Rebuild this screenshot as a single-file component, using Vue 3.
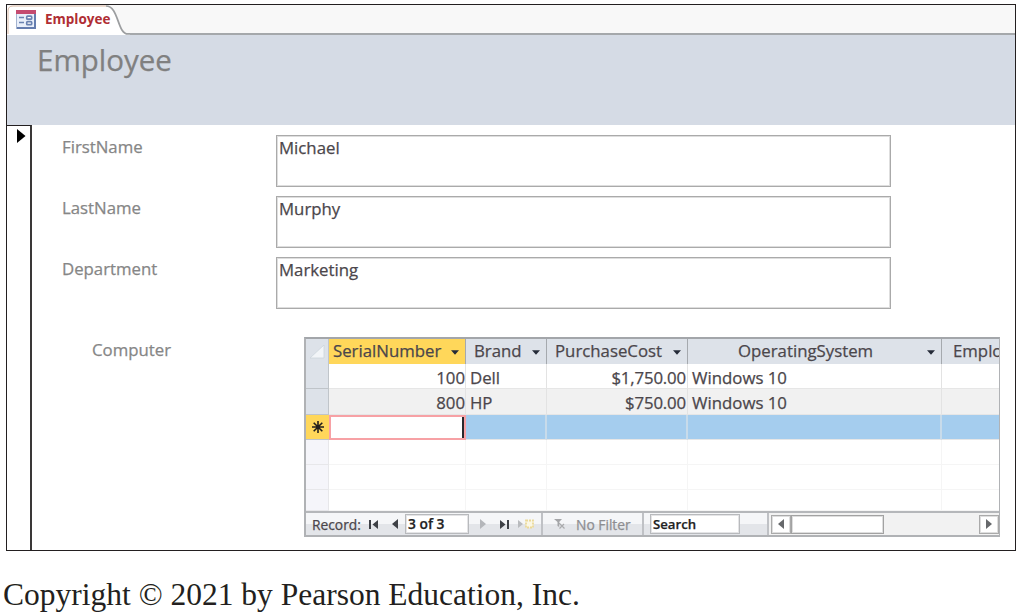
<script setup>
const fields = [
  { label: 'FirstName', value: 'Michael' },
  { label: 'LastName', value: 'Murphy' },
  { label: 'Department', value: 'Marketing' },
]
const columns = [
  { name: 'SerialNumber', cls: 'serial', menu: true },
  { name: 'Brand', cls: 'brand', menu: true },
  { name: 'PurchaseCost', cls: 'cost', menu: true },
  { name: 'OperatingSystem', cls: 'os', menu: true },
  { name: 'Emplo', cls: 'emp', menu: false },
]
const rows = [
  ['100', 'Dell', '$1,750.00', 'Windows 10', ''],
  ['800', 'HP', '$750.00', 'Windows 10', ''],
]
</script>

<template>
  <div class="page">
    <div class="window">
      <div class="tabstrip">
        <svg class="tabshape" width="123" height="30" viewBox="0 0 123 30">
          <path d="M0 30V4Q0 1 4 1H99C112 1 110 29 121 29H123V30Z" fill="#fff" />
          <path d="M1 29V6Q1 1 6 1H99" fill="none" stroke="#d9b9a4" />
          <path d="M99 1C112 1 110 29 121 29H123" fill="none" stroke="#9c9ea0" stroke-width="1.700" />
        </svg>
        <div class="tab">
          <svg width="20" height="19" viewBox="0 0 20 19">
            <rect x=".5" y=".5" width="19" height="18" fill="#e9effa" stroke="#a3b3d0" />
            <path d="M0 0H20V4H0Z" fill="#c44b70" />
            <path d="M19 4V18H1" fill="none" stroke="#657daf" stroke-width="2" />
            <path d="M3 7.500H8M3 12.500H8" stroke="#6a82b1" stroke-width="1.500" />
            <rect x="10.700" y="6.200" width="5" height="3" rx="1" fill="#fff" stroke="#6a82b1" stroke-width="1.700" />
            <rect x="10.700" y="11.700" width="5" height="3" rx="1" fill="#fff" stroke="#6a82b1" stroke-width="1.700" />
          </svg>
          <span>Employee</span>
        </div>
      </div>
      <header class="title">Employee</header>
      <div class="body">
        <div class="selector">
          <svg width="9" height="14" viewBox="0 0 9 14"><path d="M0 0L8.500 7L0 14Z" fill="#000" /></svg>
        </div>
        <main class="form">
          <div v-for="f in fields" :key="f.label" class="field">
            <label>{{ f.label }}</label>
            <div class="box">{{ f.value }}</div>
          </div>
          <div class="subrow">
            <label>Computer</label>
            <div class="subform">
              <div class="row head">
                <div class="sel">
                  <svg width="15" height="14" viewBox="0 0 15 14"><path d="M14 0V13H0Z" fill="#f2f5f8" stroke="#c9d2da" stroke-width=".7" /></svg>
                </div>
                <div v-for="c in columns" :key="c.name" class="cell" :class="c.cls">
                  <span>{{ c.name }}</span>
                  <svg v-if="c.menu" class="arrow" width="8" height="5" viewBox="0 0 8 5"><path d="M0 .3H8L4 4.800Z" fill="#252b38" /></svg>
                </div>
              </div>
              <div v-for="(r, i) in rows" :key="i" class="row data" :class="{ alt: i === 1 }">
                <div class="sel"></div>
                <div v-for="(v, j) in r" :key="j" class="cell" :class="columns[j].cls">{{ v }}</div>
              </div>
              <div class="row new">
                <div class="sel">
                  <svg width="12" height="12" viewBox="0 0 12 12"><path d="M6 0V12M0 6H12M1.700 1.700L10.300 10.300M10.300 1.700L1.700 10.300" stroke="#221f1c" stroke-width="1.600" /></svg>
                </div>
                <div v-for="c in columns" :key="c.name" class="cell" :class="c.cls"></div>
              </div>
              <div v-for="n in 3" :key="n" class="row blank">
                <div class="sel"></div>
                <div v-for="c in columns" :key="c.name" class="cell" :class="c.cls"></div>
              </div>
              <div class="nav">
                <div class="record">
                  <span class="rec">Record:</span>
                  <svg class="first" width="9" height="9" viewBox="0 0 9 9"><path d="M1 0V9" stroke="#3e4146" stroke-width="2" /><path d="M9 0V9L3.500 4.500Z" fill="#3e4146" /></svg>
                  <svg class="prev" width="6" height="10" viewBox="0 0 6 10"><path d="M6 0V10L0 5Z" fill="#3e4146" /></svg>
                  <div class="input count">3 of 3</div>
                  <svg class="next" width="6" height="10" viewBox="0 0 6 10"><path d="M0 0V10L6 5Z" fill="#b4b6ba" /></svg>
                  <svg class="last" width="9" height="9" viewBox="0 0 9 9"><path d="M8 0V9" stroke="#3e4146" stroke-width="2" /><path d="M0 0V9L5.500 4.500Z" fill="#3e4146" /></svg>
                  <svg class="add" width="16" height="10" viewBox="0 0 16 10"><path d="M0 1V9L5 5Z" fill="#b9bbbe" /><rect x="8" y="1.500" width="7" height="7" fill="#fbf7e4" stroke="#ecd998" stroke-width="1.800" stroke-dasharray="2 1" /></svg>
                </div>
                <div class="filter">
                  <svg width="12" height="12" viewBox="0 0 12 12"><path d="M0 1H8L5.200 4V9L3.500 8V4Z" fill="#a4a5a8" /><path d="M5 5L10.500 10.500M10 6L5.500 10.500" stroke="#aaabad" stroke-width="1.200" /></svg>
                  <span>No Filter</span>
                </div>
                <div class="find"><div class="input search">Search</div></div>
                <div class="scroll">
                  <div class="btn left"><svg width="6" height="10" viewBox="0 0 6 10"><path d="M6 0V10L0 5Z" fill="#66686b" /></svg></div>
                  <div class="thumb"></div>
                  <div class="btn right"><svg width="6" height="10" viewBox="0 0 6 10"><path d="M0 0V10L6 5Z" fill="#66686b" /></svg></div>
                </div>
              </div>
            </div>
          </div>
        </main>
      </div>
    </div>
    <footer>Copyright © 2021 by Pearson Education, Inc.</footer>
  </div>
</template>

<style>
body { background: #fff; }
</style>
<style scoped>
.page, .page * { box-sizing: border-box; }
.page { width: 1020px; height: 616px; padding: 4px 0 0 6px; overflow: hidden; font-family: "Open Sans", sans-serif; font-size: 16.800px; color: #4b464b; white-space: nowrap; }
svg { display: block; flex: none; }
.window { width: 1010px; height: 547px; border: 1px solid #231f20; background: #fff; display: flex; flex-direction: column; -webkit-text-stroke: .25px; }
.tabstrip { height: 30px; flex: none; position: relative; background: #f8f8f8; border-bottom: 2px solid #a5a8ab; }
.tabshape { position: absolute; left: 0; top: 0; }
.tab { position: relative; display: flex; align-items: center; height: 28px; padding-left: 9px; gap: 9px; font-weight: 700; font-size: 13.500px; color: #b02e34; -webkit-text-stroke: 0; }
.title { height: 90px; flex: none; background: #d5dbe5; padding: 5px 0 0 30px; font-size: 29.500px; line-height: 40px; color: #808080; }
.body { flex: 1; display: flex; min-height: 0; }
.selector { width: 25px; border-top: 1px solid #231f20; border-right: 2px solid #3a3838; padding: 3px 0 0 10px; }
.form { flex: 1; padding: 10px 0 0 30px; min-width: 0; }
.field { display: flex; height: 52px; margin-bottom: 9px; }
label { color: #868686; line-height: 24px; }
.field label { width: 214px; }
.box { width: 615px; border: 1px solid #aaa; box-shadow: inset 0 0 0 1px #dedede; padding: 0 0 0 2px; line-height: 24px; }
.subrow { display: flex; margin-top: 28px; padding-left: 30px; }
.subrow label { width: 212px; padding-top: 1px; }
.subform { width: 696px; height: 200px; border: 2px solid #b0b2b5; border-top-color: #a3a6aa; border-right-width: 1px; display: flex; flex-direction: column; overflow: hidden; }
.row { display: flex; height: 25px; flex: none; line-height: 28px; }
.sel { width: 23px; flex: none; background: #dde2e9; border-right: 1px solid #c0c5ca; border-bottom: 1px solid #bfc4c9; display: flex; align-items: center; justify-content: center; }
.cell { flex: none; border-right: 1px solid #e3e3e3; border-bottom: 1px solid #e6e6e6; overflow: hidden; padding: 0 4px; }
.serial { width: 137px; }
.brand { width: 81px; }
.cost { width: 141px; }
.os { width: 254px; }
.emp { width: 59px; border-right: 0; }
.head .cell { display: flex; align-items: center; background: #dde2e9; border-right-color: #a5a9ae; border-bottom: 0; padding: 0 6px 0 8px; line-height: 23px; }
.head .cell span { margin-top: -3px; }
.head .sel { border-bottom: 0; }
.head .serial { background: #ffd75a; padding-left: 4px; }
.head .os span { margin-left: 42px; }
.head .emp { padding: 0 0 0 11px; border-right: 0; }
.arrow { margin-left: auto; margin-top: 1px; }
.data .serial, .data .cost { text-align: right; padding-right: 0; }
.data .cost { letter-spacing: -.15px; padding-right: 1px; }
.data.alt { height: 26px; }
.alt .cell { background: #f1f1f1; }
.new .cell { background: #a5cdee; border-right: 2px solid #c8dbea; }
.new .sel { background: #ffd75a; border-right: 0; }
.new .serial { background: #fff; border: 2px solid #f7a1a5; box-shadow: inset -2px 0 #29292d; }
.blank .sel { background: #f5f5fa; border-color: #e7e7ea; }
.blank .cell { border-color: #f5f5f5; }
.blank:nth-last-child(2) { height: 21px; }
.nav { flex: 1; display: flex; border-top: 2px solid #b5b7ba; font-size: 13.800px; background: linear-gradient(#f5f6f8 0 48%, #e3e5e9 50%); }
.record, .filter, .find { display: flex; align-items: center; border-right: 2px solid #bfc1c5; }
.record { width: 237px; padding-left: 6px; }
.rec { width: 57px; }
.prev { margin-left: 14px; }
.input { height: 20px; border: 1px solid #b8babd; box-shadow: inset 0 0 0 1px #e4e4e6; background: #fff; color: #222; font-size: 13.200px; font-weight: 600; line-height: 18px; padding-left: 2px; }
.count { width: 64px; margin-left: 7px; font-size: 13.800px; }
.next { margin-left: 11px; }
.last { margin-left: 14px; }
.add { margin-left: 9px; }
.filter { width: 101px; padding-left: 11px; gap: 10px; color: #8e8e91; }
.find { width: 125px; padding-left: 6px; }
.search { width: 90px; }
.scroll { flex: 1; display: flex; align-items: center; padding-left: 2px; background: #f2f2f2; }
.btn { width: 20px; height: 19px; border: 1px solid #aaa; box-shadow: inset 0 0 0 1px #dedede; background: #fff; display: flex; align-items: center; justify-content: center; }
.thumb { width: 93px; height: 19px; border: 1px solid #a2a2a2; box-shadow: inset 0 0 0 1px #dedede; background: #fff; }
.right { margin-left: auto; }
footer { margin: 26px 0 0 -3px; font-family: "Liberation Serif", serif; font-size: 31.500px; line-height: 36px; color: #231f20; }
</style>
